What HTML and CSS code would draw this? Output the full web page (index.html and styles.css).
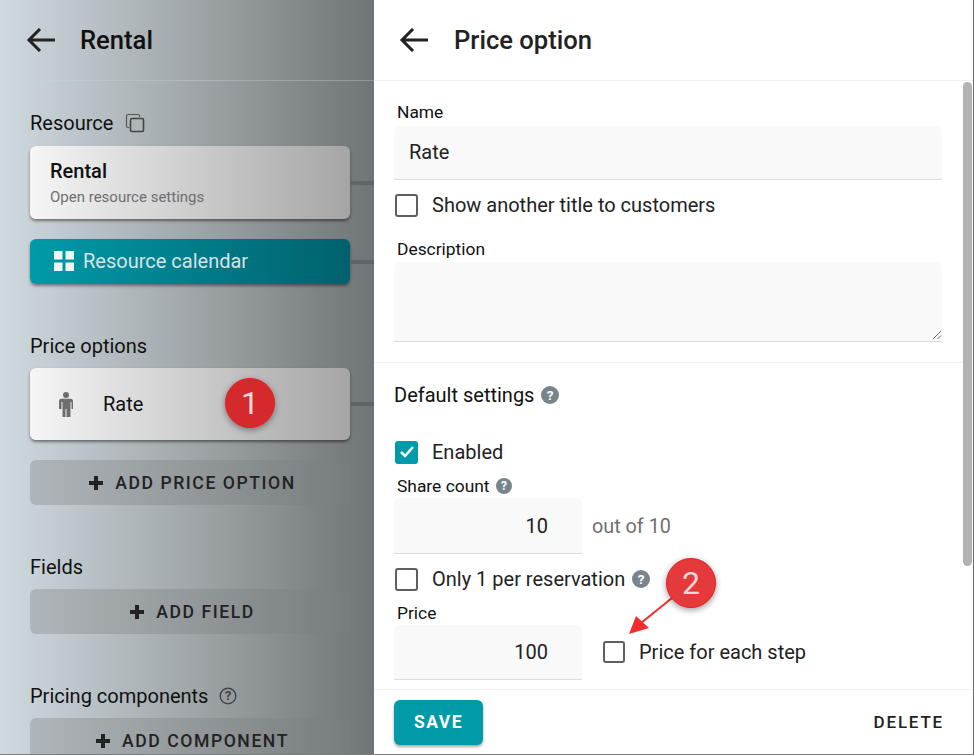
FILE: index.html
```html
<!DOCTYPE html>
<html lang="en">
<head>
<meta charset="utf-8">
<title>Price option</title>
<link rel="stylesheet" href="styles.css">
</head>
<body>
<div class="app">
  <aside class="left">
    <header class="left-head">
      <svg class="back" viewBox="0 0 30 24"><path d="M29 12H3M14 1 3 12l11 11" fill="none" stroke="#222" stroke-width="3"/></svg>
      <h1 class="left-title">Rental</h1>
    </header>
    <div class="left-body">
      <div class="sec-label first">Resource
        <svg class="copy" viewBox="0 0 20 20"><path d="M4 14.500H3a1.500 1.500 0 0 1-1.500-1.500V3A1.500 1.500 0 0 1 3 1.500h10A1.500 1.500 0 0 1 14.500 3v1" fill="none" stroke="#555" stroke-width="1.200"/><rect x="5.500" y="5.500" width="13" height="13" rx="1.500" fill="none" stroke="#444" stroke-width="1.600"/></svg>
      </div>
      <div class="row-link">
        <div class="card res-card">
          <div class="card-title">Rental</div>
          <div class="card-sub">Open resource settings</div>
        </div>
      </div>
      <div class="row-link cal-row">
        <div class="cal-btn">
          <svg class="grid-ico" viewBox="0 0 20 20"><path fill="#f2f5f5" d="M0 0h8.500v8.500H0zM11.500 0H20v8.500h-8.500zM0 11.500h8.500V20H0zM11.500 11.500H20V20h-8.500z"/></svg>
          <span>Resource calendar</span>
        </div>
      </div>
      <div class="sec-label gap-price">Price options</div>
      <div class="row-link">
        <div class="card rate-card">
          <svg class="person" viewBox="0 0 14 25"><circle cx="7" cy="3" r="3" fill="#6e6e6e"/><path fill="#6e6e6e" d="M2.500 6.800h9A2.500 2.500 0 0 1 14 9.300V17h-1.500V10h-1v15H7.500V17h-1v8H3.500V10h-1v7H0V9.300A2.500 2.500 0 0 1 2.500 6.800z"/></svg>
          <span class="rate-name">Rate</span>
          <span class="badge badge-one">1</span>
        </div>
      </div>
      <div class="add-btn add-first"><svg class="plus" viewBox="0 0 14 14"><path d="M5 0h4v5h5v4H9v5H5V9H0V5h5z" fill="#222"/></svg>ADD PRICE OPTION</div>
      <div class="sec-label gap-field">Fields</div>
      <div class="add-btn"><svg class="plus" viewBox="0 0 14 14"><path d="M5 0h4v5h5v4H9v5H5V9H0V5h5z" fill="#222"/></svg>ADD FIELD</div>
      <div class="sec-label gap-field">Pricing components
        <svg class="help-o" viewBox="0 0 18 18"><circle cx="9" cy="9" r="7.800" fill="none" stroke="#444" stroke-width="1.400"/><text x="9" y="13" text-anchor="middle" class="help-t help-dark">?</text></svg>
      </div>
      <div class="add-btn"><svg class="plus" viewBox="0 0 14 14"><path d="M5 0h4v5h5v4H9v5H5V9H0V5h5z" fill="#222"/></svg>ADD COMPONENT</div>
    </div>
  </aside>
  <main class="right">
    <header class="right-head">
      <svg class="back" viewBox="0 0 30 24"><path d="M29 12H3M14 1 3 12l11 11" fill="none" stroke="#222" stroke-width="3"/></svg>
      <h1 class="right-title">Price option</h1>
    </header>
    <div class="right-body">
      <section class="form-top">
        <label class="flabel">Name</label>
        <div class="input name-input">Rate</div>
        <div class="check-row show-row"><span class="cbox"></span><span>Show another title to customers</span></div>
        <label class="flabel desc-label">Description</label>
        <div class="input textarea">
          <svg class="grip" viewBox="0 0 10 10"><path d="M1 9 9 1M5.500 9 9 5.500" stroke="#666" stroke-width="1" fill="none"/></svg>
        </div>
      </section>
      <section class="form-rest">
        <div class="default-head">Default settings
          <svg class="help" viewBox="0 0 18 18"><circle cx="9" cy="9" r="9" fill="#78848c"/><text x="9" y="13.500" text-anchor="middle" class="help-t">?</text></svg>
        </div>
        <div class="check-row enabled-row"><span class="cbox on"><svg viewBox="0 0 23 23"><path d="M6 11l4 4 8-9" fill="none" stroke="#fff" stroke-width="2.500"/></svg></span><span>Enabled</span></div>
        <label class="flabel share-label">Share count
          <svg class="help small" viewBox="0 0 18 18"><circle cx="9" cy="9" r="9" fill="#78848c"/><text x="9" y="13.500" text-anchor="middle" class="help-t">?</text></svg>
        </label>
        <div class="num-row">
          <div class="input num">10</div>
          <span class="out-of">out of 10</span>
        </div>
        <div class="check-row only-row"><span class="cbox"></span><span>Only 1 per reservation</span>
          <svg class="help" viewBox="0 0 18 18"><circle cx="9" cy="9" r="9" fill="#78848c"/><text x="9" y="13.500" text-anchor="middle" class="help-t">?</text></svg>
        </div>
        <label class="flabel price-label">Price</label>
        <div class="num-row">
          <div class="input num price-num">100</div>
          <div class="check-row step-row"><span class="cbox"></span><span>Price for each step</span></div>
        </div>
      </section>
    </div>
    <footer class="right-foot">
      <div class="save">SAVE</div>
      <div class="delete">DELETE</div>
    </footer>
    <div class="scrollbar"></div>
    <svg class="arrow" viewBox="0 0 60 50"><path d="M43 10 12 35" stroke="#f22d2d" stroke-width="2" fill="none"/><path d="M0 46 7 28 20 40z" fill="#f22d2d"/></svg>
    <span class="badge badge-two">2</span>
  </main>
</div>
</body>
</html>
```
FILE: styles.css
```css
* { box-sizing: border-box; }
html, body { margin: 0; padding: 0; height: 755px; overflow: hidden; background: #fff; }
body { font-family: Roboto, "Liberation Sans", sans-serif; color: #1c1c1c; }
.app { display: flex; width: 974px; height: 755px; border-bottom: 1px solid #7d7d7d; border-right: 1px solid #6b6b6b; }

.left { width: 374px; flex: none; height: 754px; overflow: hidden; background: linear-gradient(90deg, #cfdae0 0%, #a6adb0 45%, #6f7476 100%); color: #111; }
.left-head { height: 81px; display: flex; align-items: center; padding-left: 26px; border-bottom: 1px solid rgba(200,215,222,.35); }
.back { width: 30px; height: 24px; flex: none; }
.left-title { margin: 0 0 0 24px; font-size: 25.600px; font-weight: 500; line-height: 28px; }
.left-body { padding: 0 24px 0 30px; }
.sec-label { font-size: 20px; line-height: 24px; display: flex; align-items: center; height: 24px; }
.sec-label.first { margin-top: 30px; margin-bottom: 11px; }
.copy { width: 20px; height: 20px; margin-left: 12px; }
.row-link { position: relative; width: 344px; }
.row-link::after { content: ""; position: absolute; right: 0; top: 50%; margin-top: -2px; width: 24px; height: 4px; background: #5f6466; }
.card { width: 320px; border-radius: 6px; background: linear-gradient(90deg, #f6f6f6, #a5a5a5); box-shadow: 0 2px 3px rgba(0,0,0,.45); }
.res-card { height: 73px; padding: 14px 20px 0; }
.card-title { font-size: 20px; font-weight: 500; line-height: 23px; color: #111; }
.card-sub { font-size: 15px; line-height: 18px; margin-top: 5px; color: #6e6e6e; }
.cal-row { margin-top: 20px; }
.cal-btn { width: 320px; height: 45px; border-radius: 6px; background: linear-gradient(90deg, #009aa8, #00616d); box-shadow: 0 2px 3px rgba(0,0,0,.4); display: flex; align-items: center; padding: 0 0 1px 24px; font-size: 20px; color: #d8e2e4; }
.grid-ico { width: 20px; height: 20px; margin-right: 9px; }
.gap-price { margin-top: 50px; margin-bottom: 10px; }
.rate-card { height: 72px; display: flex; align-items: center; position: relative; padding-left: 29px; }
.person { width: 14px; height: 25px; flex: none; }
.rate-name { font-size: 20px; margin-left: 30px; color: #111; }
.badge { position: absolute; width: 50px; height: 50px; border-radius: 50%; background: #d42a2e; border: 1px solid #f01c20; color: #f0d8d8; font-size: 32px; display: flex; align-items: center; justify-content: center; box-shadow: 0 2px 6px rgba(0,0,0,.4); }
.badge-one { left: 195px; top: 10px; }
.badge-two { left: 292px; top: 558px; background: #e43a3c; }
.add-btn { width: 320px; height: 45px; border-radius: 6px; background: linear-gradient(90deg, #afb6b9, #777c7e); display: flex; align-items: center; justify-content: center; padding-left: 5px; font-size: 17.600px; font-weight: 500; letter-spacing: 1.550px; color: #222; }
.add-first { margin-top: 20px; }
.plus { width: 14px; height: 14px; margin-right: 12px; }
.gap-field { margin-top: 50px; margin-bottom: 10px; }
.help-o { width: 18px; height: 18px; margin-left: 11px; }
.help-t { font: 700 13.500px Roboto, sans-serif; fill: #fff; }
.help-dark { fill: #444; }

.right { width: 599px; flex: none; height: 754px; position: relative; display: flex; flex-direction: column; }
.right-head { height: 81px; flex: none; display: flex; align-items: center; padding-left: 25px; border-bottom: 1px solid #f0f0f0; }
.right-title { margin: 0 0 0 25px; font-size: 25.600px; line-height: 28px; font-weight: 500; color: #222; }
.right-body { flex: 1; overflow: hidden; }
.form-top { padding: 19px 31px 20px 20px; height: 282px; border-bottom: 1px solid #f0f0f0; }
.flabel { display: flex; align-items: center; font-size: 17.400px; line-height: 24px; color: #111; padding-left: 3px; }
.input { background: #f9f9f9; border-bottom: 1px solid #dcdcdc; border-radius: 6px 6px 0 0; font-size: 20px; color: #222; }
.name-input { height: 54px; line-height: 53px; padding-left: 15px; margin-top: 2px; }
.check-row { display: flex; align-items: center; font-size: 20px; color: #222; }
.cbox { width: 23px; height: 23px; border: 2px solid #5f5f5f; border-radius: 3px; flex: none; margin-right: 14px; background: #fff; display: block; }
.cbox.on { background: #009aa8; border: 0; }
.cbox.on svg { display: block; width: 23px; height: 23px; }
.show-row { height: 24px; margin-top: 13px; padding-left: 1px; }
.desc-label { margin-top: 20px; }
.textarea { height: 80px; margin-top: 1px; position: relative; }
.grip { position: absolute; right: 0; bottom: 1px; width: 10px; height: 10px; }
.form-rest { padding: 0 20px; }
.default-head { display: flex; align-items: center; height: 24px; margin-top: 20px; font-size: 20px; color: #111; }
.help { width: 18px; height: 18px; margin-left: 7px; }
.help.small { width: 16px; height: 16px; margin-left: 6px; }
.enabled-row { margin-top: 33px; height: 24px; padding-left: 1px; }
.share-label { margin-top: 10px; }
.num-row { display: flex; align-items: center; }
.num { width: 188px; height: 56px; line-height: 56px; text-align: right; padding-right: 34px; flex: none; }
.out-of { margin-left: 10px; font-size: 19.800px; color: #6f6f6f; }
.only-row { margin-top: 13px; height: 24px; padding-left: 1px; }
.price-label { margin-top: 10px; }
.price-num { height: 55px; line-height: 54px; }
.step-row { margin-left: 21px; padding-bottom: 2px; }
.step-row .cbox { width: 22px; height: 22px; }
.right-foot { height: 65px; flex: none; border-top: 1px solid #f0f0f0; display: flex; justify-content: space-between; align-items: center; padding: 0 29px 0 20px; }
.save { width: 89px; height: 45px; border-radius: 6px; background: #009aa8; color: #fff; font-size: 17.500px; font-weight: 700; letter-spacing: 1.500px; display: flex; align-items: center; justify-content: center; box-shadow: 0 2px 3px rgba(0,0,0,.35); }
.delete { font-size: 17px; font-weight: 500; letter-spacing: 1.800px; color: #222; }
.scrollbar { position: absolute; left: 589px; top: 82px; width: 9px; height: 484px; background: #b2b2b2; border-radius: 5px; }
.arrow { position: absolute; left: 255px; top: 588px; width: 60px; height: 50px; }
```
